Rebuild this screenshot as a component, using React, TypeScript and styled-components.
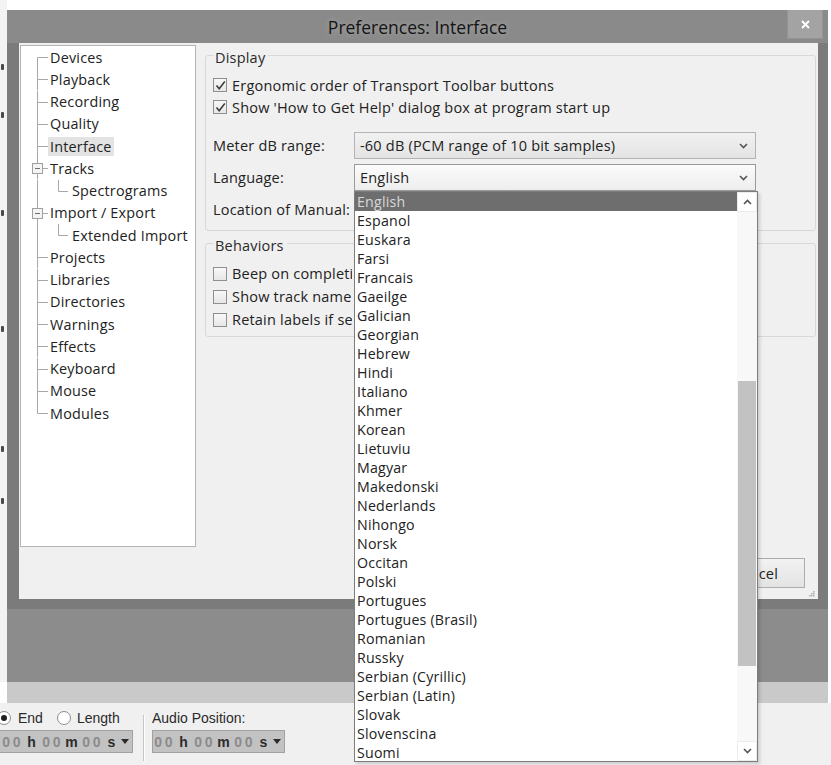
import React from 'react';
import styled, { createGlobalStyle } from 'styled-components';

const UI_FONT = `"Open Sans", "Noto Sans", "DejaVu Sans", sans-serif`;
const TOOLBAR_FONT = `"Liberation Sans", Arial, sans-serif`;

const ROW_H = 22.25;
const LIST_ROW_H = 19;

const GlobalStyle = createGlobalStyle`
  html, body {
    margin: 0;
    padding: 0;
    background: #ffffff;
  }
  body {
    font-family: ${UI_FONT};
    font-size: 14.5px;
    letter-spacing: 0.2px;
    color: #222222;
  }
  * {
    box-sizing: border-box;
  }
`;

type TreeItem = {
  label: string;
  level: number;
  expander?: boolean;
  selected?: boolean;
};

const TREE: TreeItem[] = [
  { label: 'Devices', level: 0 },
  { label: 'Playback', level: 0 },
  { label: 'Recording', level: 0 },
  { label: 'Quality', level: 0 },
  { label: 'Interface', level: 0, selected: true },
  { label: 'Tracks', level: 0, expander: true },
  { label: 'Spectrograms', level: 1 },
  { label: 'Import / Export', level: 0, expander: true },
  { label: 'Extended Import', level: 1 },
  { label: 'Projects', level: 0 },
  { label: 'Libraries', level: 0 },
  { label: 'Directories', level: 0 },
  { label: 'Warnings', level: 0 },
  { label: 'Effects', level: 0 },
  { label: 'Keyboard', level: 0 },
  { label: 'Mouse', level: 0 },
  { label: 'Modules', level: 0 },
];

const LANGUAGES = [
  'English', 'Espanol', 'Euskara', 'Farsi', 'Francais', 'Gaeilge', 'Galician',
  'Georgian', 'Hebrew', 'Hindi', 'Italiano', 'Khmer', 'Korean', 'Lietuviu',
  'Magyar', 'Makedonski', 'Nederlands', 'Nihongo', 'Norsk', 'Occitan', 'Polski',
  'Portugues', 'Portugues (Brasil)', 'Romanian', 'Russky', 'Serbian (Cyrillic)',
  'Serbian (Latin)', 'Slovak', 'Slovenscina', 'Suomi',
];

// gaps between the little marks of the app window peeking out on the left
const GUTTER_TICKS = [64, 42, 92, 110, 114, 46];

// the drop list hides everything right of this x in the behaviors box
const BEHAVIOR_CLIP = 120;

const Screen = styled.div`
  width: 831px;
  height: 765px;
  overflow: hidden;
  display: flex;
  flex-direction: column;
  background: #ffffff;
`;

const Upper = styled.div`
  display: flex;
  height: 703px;
`;

const LeftGutter = styled.div`
  width: 7px;
  height: 682px;
  background: #f3f3f3;
  display: flex;
  flex-direction: column;
`;

const Tick = styled.div<{ $gap: number }>`
  margin-top: ${(p) => p.$gap}px;
  margin-left: 1px;
  width: 3px;
  height: 6px;
  background: #4a4a4a;
  border-radius: 1px;
`;

const Stage = styled.div`
  width: 821px;
  display: flex;
  flex-direction: column;
`;

const TopStrip = styled.div`
  height: 10px;
  background: #ffffff;
`;

const Dialog = styled.div`
  height: 599px;
  background: #7b7b7b;
  display: flex;
  flex-direction: column;
  padding: 0 10px 10px 12px;
`;

const TitleBar = styled.div`
  height: 33px;
  margin: 0 -10px 0 -12px;
  background: #8a8a8a;
  display: grid;
  grid-template-columns: 1fr auto 1fr;
  align-items: center;
`;

const Title = styled.div`
  grid-column: 2;
  font-size: 17.5px;
  letter-spacing: 0;
  color: #141414;
  text-shadow: 0 0 6px rgba(255, 255, 255, 0.3);
`;

const CloseButton = styled.div`
  grid-column: 3;
  justify-self: end;
  align-self: start;
  width: 36px;
  height: 29px;
  margin-right: 5px;
  background: #a3a3a3;
  border: 1px solid #939393;
  border-top: none;
  display: flex;
  align-items: center;
  justify-content: center;
`;

const Body = styled.div`
  flex: 1;
  background: #f0f0f0;
  display: flex;
  flex-direction: column;
  padding: 2px 2px 0 1px;
`;

const MainRow = styled.div`
  display: flex;
  height: 502px;
`;

const Tree = styled.div`
  width: 176px;
  height: 502px;
  background: #ffffff;
  border: 1px solid #b4b4b4;
  display: flex;
  flex-direction: column;
`;

const TreeRow = styled.div`
  height: ${ROW_H}px;
  display: flex;
  align-items: center;
`;

const TreeLabel = styled.span<{ $selected?: boolean }>`
  padding: 0 2px;
  line-height: 19px;
  font-size: 14.4px;
  white-space: nowrap;
  color: #222222;
  background: ${(p) => (p.$selected ? '#e3e3e3' : 'transparent')};
`;

const Panel = styled.div`
  flex: 1;
  padding-left: 9px;
  display: flex;
  flex-direction: column;
`;

const GroupBox = styled.div<{ $top: number; $height: number }>`
  margin-top: ${(p) => p.$top}px;
  height: ${(p) => p.$height}px;
  border: 1px solid #d8d8d8;
  border-radius: 3px;
  padding-left: 7px;
  display: flex;
  flex-direction: column;
`;

const Caption = styled.div`
  margin-top: -7px;
  width: fit-content;
  padding: 0 3px 0 2px;
  line-height: 17px;
  background: #f0f0f0;
  color: #2a2a2a;
`;

const CheckRow = styled.div<{ $top?: number; $height: number }>`
  margin-top: ${(p) => p.$top ?? 0}px;
  height: ${(p) => p.$height}px;
  display: flex;
  align-items: center;
  gap: 5px;
  white-space: nowrap;
`;

const CheckBox = styled.span`
  flex: none;
  width: 14px;
  height: 14px;
  border: 1px solid #8f8f8f;
  background: linear-gradient(#f8f8f8, #e6e6e6);
  display: flex;
  align-items: center;
  justify-content: center;
`;

const CheckText = styled.span<{ $clip?: number }>`
  overflow: hidden;
  max-width: ${(p) => (p.$clip ? `${p.$clip}px` : 'none')};
`;

const FieldRow = styled.div<{ $top: number }>`
  margin-top: ${(p) => p.$top}px;
  display: flex;
  align-items: center;
`;

const FieldLabel = styled.span`
  width: 141px;
  white-space: nowrap;
`;

const Combo = styled.div<{ $focused?: boolean }>`
  position: relative;
  width: 402px;
  height: 27px;
  border: 1px solid ${(p) => (p.$focused ? '#9a9a9a' : '#b3b3b3')};
  background: ${(p) =>
    p.$focused ? 'linear-gradient(#fbfbfb, #ededed)' : 'linear-gradient(#f1f1f1, #e4e4e4)'};
  display: flex;
  align-items: center;
  justify-content: space-between;
  padding: 0 7px 0 5px;
  white-space: nowrap;
`;

const DropList = styled.div`
  position: absolute;
  top: calc(100% + 1px);
  left: -1px;
  width: 404px;
  height: 571px;
  z-index: 10;
  background: #ffffff;
  border: 1px solid #7d7d7d;
  box-shadow: 2px 2px 3px rgba(0, 0, 0, 0.15);
  display: flex;
  overflow: hidden;
  font-size: 14.2px;
`;

const ListItems = styled.div`
  flex: 1;
  display: flex;
  flex-direction: column;
`;

const ListItem = styled.div<{ $active?: boolean }>`
  flex: none;
  height: ${LIST_ROW_H}px;
  line-height: ${LIST_ROW_H}px;
  padding-left: 2px;
  background: ${(p) => (p.$active ? '#6e6e6e' : 'transparent')};
  color: ${(p) => (p.$active ? '#d8d8d8' : '#222222')};
`;

const ScrollBar = styled.div`
  width: 20px;
  display: flex;
  flex-direction: column;
  background: #f8f8f8;
`;

const ScrollArrow = styled.div`
  height: 20px;
  display: flex;
  align-items: center;
  justify-content: center;
  background: #ffffff;
  border: 1px solid #ececec;
`;

const ScrollTrack = styled.div`
  flex: 1;
  display: flex;
  flex-direction: column;
`;

const ScrollThumb = styled.div<{ $offset: number; $size: number }>`
  margin: ${(p) => p.$offset}px 1px 0 1px;
  height: ${(p) => p.$size}px;
  background: #c2c2c2;
`;

const ButtonRow = styled.div`
  flex: 1;
  display: flex;
  align-items: center;
  justify-content: flex-end;
  padding-right: 1px;
`;

const DialogButton = styled.div`
  width: 100px;
  height: 30px;
  margin-right: 4px;
  border: 1px solid #adadad;
  background: linear-gradient(#f2f2f2, #e3e3e3);
  display: flex;
  align-items: center;
  justify-content: center;
`;

const Grip = styled.svg`
  align-self: flex-end;
  margin-bottom: 2px;
`;

const AppBackdrop = styled.div`
  height: 73px;
  background: #8c8c8c;
`;

const Band = styled.div`
  height: 21px;
  background: #c9c9c9;
`;

const Toolbar = styled.div`
  flex: 1;
  background: #f0f0f0;
  display: flex;
  align-items: flex-start;
  padding-top: 7px;
  font-family: ${TOOLBAR_FONT};
  font-size: 14px;
  letter-spacing: 0;
  color: #2a2a2a;
`;

const ToolGroup = styled.div<{ $shift: number }>`
  margin-left: ${(p) => p.$shift}px;
  display: flex;
  flex-direction: column;
`;

const ToolRow = styled.div`
  height: 16px;
  display: flex;
  align-items: center;
  white-space: nowrap;
`;

const Radio = styled.span<{ $checked?: boolean; $gap: number }>`
  flex: none;
  margin-left: ${(p) => p.$gap}px;
  width: 14px;
  height: 14px;
  border-radius: 50%;
  border: 1px solid #8d8d8d;
  background: #ffffff;
  display: flex;
  align-items: center;
  justify-content: center;
  &::after {
    content: '';
    width: 6px;
    height: 6px;
    border-radius: 50%;
    background: ${(p) => (p.$checked ? '#1e1e1e' : 'transparent')};
  }
`;

const ToolLabel = styled.span<{ $gap: number }>`
  margin-left: ${(p) => p.$gap}px;
`;

const Separator = styled.div`
  margin: 5px 0 0 10px;
  width: 2px;
  height: 46px;
  border-left: 1px solid #c6c6c6;
  border-right: 1px solid #ffffff;
`;

const TimeBox = styled.div<{ $width: number }>`
  margin-top: 4px;
  width: ${(p) => p.$width}px;
  height: 23px;
  display: flex;
  align-items: center;
  justify-content: flex-end;
  padding-right: 3px;
  background: #c2c2c2;
  border: 1px solid #a2a2a2;
  font-size: 14px;
  font-weight: bold;
  overflow: hidden;
`;

const Digit = styled.span`
  width: 10.5px;
  text-align: center;
  color: #8c8c8c;
`;

const Unit = styled.span`
  width: 19px;
  text-align: center;
  color: #2b2b2b;
`;

const Chevron = ({ up }: { up?: boolean }) => (
  <svg width="9" height="6" viewBox="0 0 9 6">
    <path
      d={up ? 'M1 5 L4.5 1.5 L8 5' : 'M1 1 L4.5 4.5 L8 1'}
      fill="none"
      stroke="#555555"
      strokeWidth="1.6"
    />
  </svg>
);

const CheckMark = () => (
  <svg width="11" height="11" viewBox="0 0 11 11">
    <path d="M1.5 5.5 L4.2 8.8 L9.8 1.5" fill="none" stroke="#3a3a3a" strokeWidth="1.5" />
  </svg>
);

const TreeLines = ({ item, first, last }: { item: TreeItem; first: boolean; last: boolean }) => {
  const w = item.level === 0 ? 27 : 49;
  const mid = Math.round(ROW_H / 2) + 0.5;
  return (
    <svg width={w} height={ROW_H} style={{ flex: 'none' }}>
      <g stroke="#a8a8a8" strokeWidth="1" fill="none">
        <line x1={16.5} y1={first ? mid : 0} x2={16.5} y2={last ? mid : ROW_H} />
        {item.level === 0 && <line x1={item.expander ? 21 : 16.5} y1={mid} x2={27} y2={mid} />}
        {item.level === 1 && (
          <>
            <line x1={37.5} y1={0} x2={37.5} y2={mid} />
            <line x1={37.5} y1={mid} x2={47} y2={mid} />
          </>
        )}
        {item.expander && (
          <>
            <rect x={11.5} y={mid - 5} width={10} height={10} fill="#f4f4f4" stroke="#a0a0a0" />
            <line x1={14} y1={mid} x2={19} y2={mid} stroke="#707070" />
          </>
        )}
      </g>
    </svg>
  );
};

type CheckProps = { checked?: boolean; label: string; top?: number; height: number; clip?: number };

const Check = ({ checked, label, top, height, clip }: CheckProps) => (
  <CheckRow $top={top} $height={height}>
    <CheckBox>{checked && <CheckMark />}</CheckBox>
    <CheckText $clip={clip}>{label}</CheckText>
  </CheckRow>
);

const TimeControl = ({ width }: { width: number }) => (
  <TimeBox $width={width}>
    {['h', 'm', 's'].map((u) => (
      <React.Fragment key={u}>
        <Digit>0</Digit>
        <Digit>0</Digit>
        <Unit>{u}</Unit>
      </React.Fragment>
    ))}
    <svg width="8" height="5" viewBox="0 0 8 5">
      <path d="M0 0 H8 L4 5 Z" fill="#2b2b2b" />
    </svg>
  </TimeBox>
);

const App = () => {
  return (
    <Screen>
      <GlobalStyle />
      <Upper>
        <LeftGutter>
          {GUTTER_TICKS.map((gap, i) => (
            <Tick key={i} $gap={gap} />
          ))}
        </LeftGutter>
        <Stage>
          <TopStrip />
          <Dialog>
            <TitleBar>
              <Title>Preferences: Interface</Title>
              <CloseButton>
                <svg width="9" height="9" viewBox="0 0 9 9">
                  <path d="M1 1 L8 8 M8 1 L1 8" stroke="#ffffff" strokeWidth="2" />
                </svg>
              </CloseButton>
            </TitleBar>
            <Body>
              <MainRow>
                <Tree>
                  {TREE.map((item, i) => (
                    <TreeRow key={item.label}>
                      <TreeLines item={item} first={i === 0} last={i === TREE.length - 1} />
                      <TreeLabel $selected={item.selected}>{item.label}</TreeLabel>
                    </TreeRow>
                  ))}
                </Tree>
                <Panel>
                  <GroupBox $top={10} $height={176}>
                    <Caption>Display</Caption>
                    <Check checked top={8} height={22} label="Ergonomic order of Transport Toolbar buttons" />
                    <Check checked height={22} label="Show 'How to Get Help' dialog box at program start up" />
                    <FieldRow $top={14}>
                      <FieldLabel>Meter dB range:</FieldLabel>
                      <Combo>
                        <span>-60 dB (PCM range of 10 bit samples)</span>
                        <Chevron />
                      </Combo>
                    </FieldRow>
                    <FieldRow $top={5}>
                      <FieldLabel>Language:</FieldLabel>
                      <Combo $focused>
                        <span>English</span>
                        <Chevron />
                        <DropList>
                          <ListItems>
                            {LANGUAGES.map((lang, i) => (
                              <ListItem key={lang} $active={i === 0}>
                                {lang}
                              </ListItem>
                            ))}
                          </ListItems>
                          <ScrollBar>
                            <ScrollArrow>
                              <Chevron up />
                            </ScrollArrow>
                            <ScrollTrack>
                              <ScrollThumb $offset={169} $size={285} />
                            </ScrollTrack>
                            <ScrollArrow>
                              <Chevron />
                            </ScrollArrow>
                          </ScrollBar>
                        </DropList>
                      </Combo>
                    </FieldRow>
                    <FieldRow $top={5}>
                      <FieldLabel>Location of Manual:</FieldLabel>
                      <Combo>
                        <span />
                        <Chevron />
                      </Combo>
                    </FieldRow>
                  </GroupBox>
                  <GroupBox $top={12} $height={94}>
                    <Caption>Behaviors</Caption>
                    <Check top={8} height={23} clip={BEHAVIOR_CLIP} label="Beep on completion of longer activities" />
                    <Check height={23} clip={BEHAVIOR_CLIP} label="Show track name as overlay" />
                    <Check height={23} clip={BEHAVIOR_CLIP} label="Retain labels if selection snaps to a label edge" />
                  </GroupBox>
                </Panel>
              </MainRow>
              <ButtonRow>
                <DialogButton>Cancel</DialogButton>
                <Grip width="6" height="6" viewBox="0 0 6 6">
                  <g fill="#b0b0b0">
                    <rect x="4" y="0" width="1.5" height="1.5" />
                    <rect x="2" y="2" width="1.5" height="1.5" />
                    <rect x="4" y="2" width="1.5" height="1.5" />
                    <rect x="0" y="4" width="1.5" height="1.5" />
                    <rect x="2" y="4" width="1.5" height="1.5" />
                    <rect x="4" y="4" width="1.5" height="1.5" />
                  </g>
                </Grip>
              </ButtonRow>
            </Body>
          </Dialog>
          <AppBackdrop />
          <Band />
        </Stage>
      </Upper>
      <Toolbar>
        <ToolGroup $shift={-4}>
          <ToolRow>
            <Radio $checked $gap={1} />
            <ToolLabel $gap={7}>End</ToolLabel>
            <Radio $gap={14} />
            <ToolLabel $gap={6}>Length</ToolLabel>
          </ToolRow>
          <TimeControl width={137} />
        </ToolGroup>
        <Separator />
        <ToolGroup $shift={7}>
          <ToolRow>
            <ToolLabel $gap={0}>Audio Position:</ToolLabel>
          </ToolRow>
          <TimeControl width={133} />
        </ToolGroup>
      </Toolbar>
    </Screen>
  );
};

export default App;
